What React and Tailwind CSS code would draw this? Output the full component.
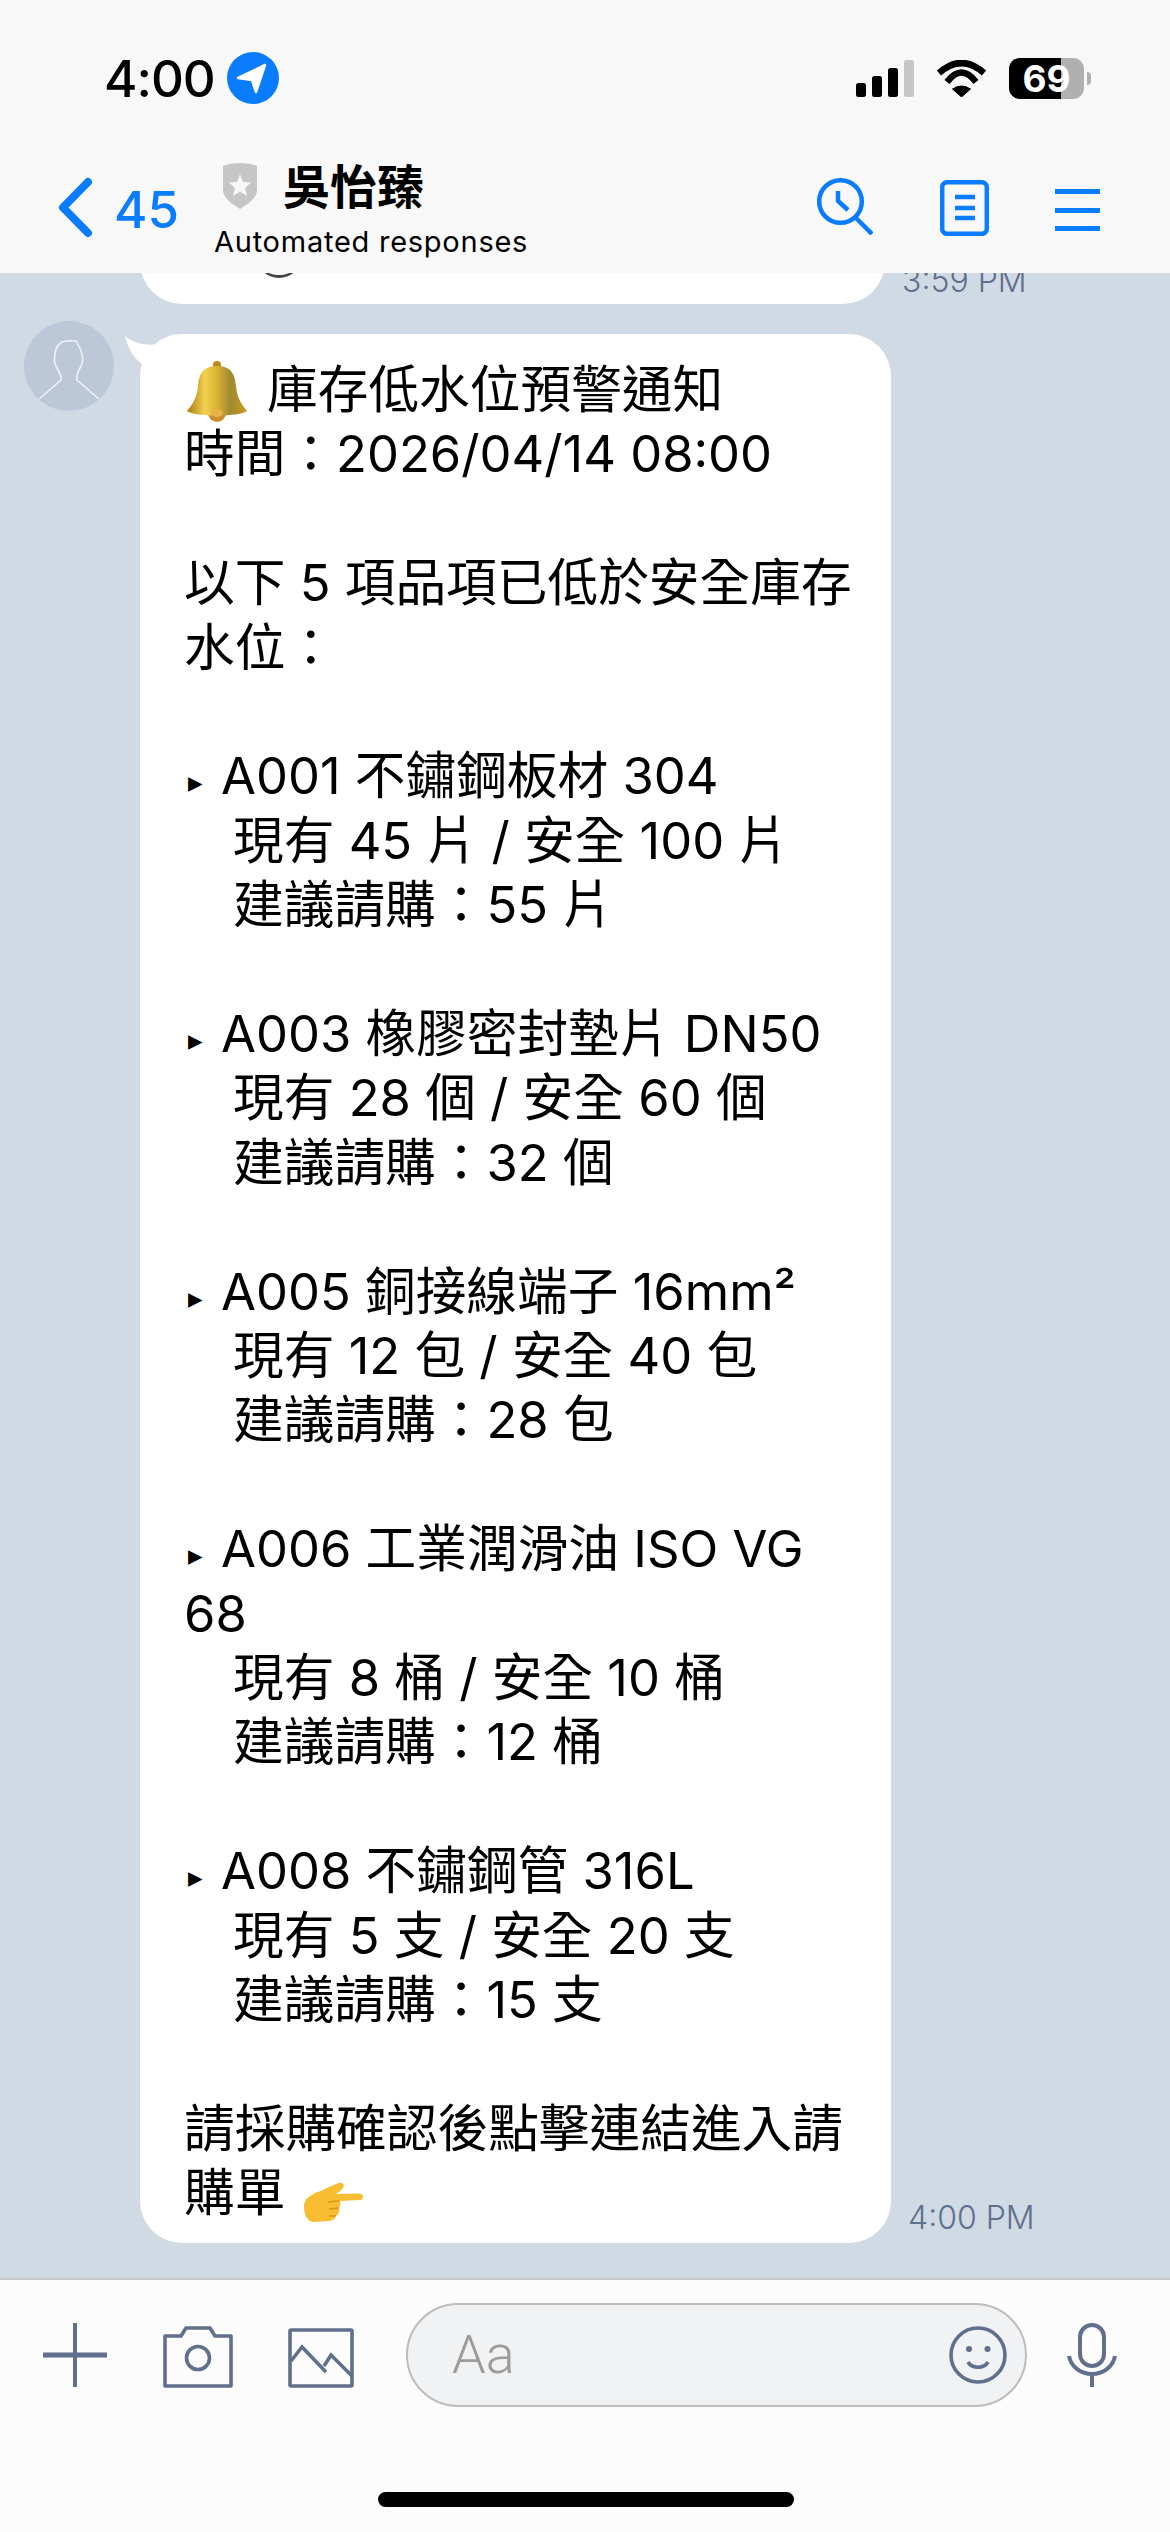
const items = [
  ["A001 不鏽鋼板材 304", "現有 45 片 / 安全 100 片", "建議請購：55 片"],
  ["A003 橡膠密封墊片 DN50", "現有 28 個 / 安全 60 個", "建議請購：32 個"],
  ["A005 銅接線端子 16mm²", "現有 12 包 / 安全 40 包", "建議請購：28 包"],
  ["A006 工業潤滑油 ISO VG 68", "現有 8 桶 / 安全 10 桶", "建議請購：12 桶"],
  ["A008 不鏽鋼管 316L", "現有 5 支 / 安全 20 支", "建議請購：15 支"],
];
const blue = "#0a7cff";
const slate = "#5f6f8c";

function Bell() {
  return (
    <svg width="62" height="62" viewBox="0 0 62 62" className="inline-block align-[-3px] my-[-12px] ml-[2px]">
      <defs>
        <linearGradient id="bellg" x1="0" x2="1" y1="0" y2="0">
          <stop offset="0" stopColor="#a9790f" />
          <stop offset="0.3" stopColor="#f3d24f" />
          <stop offset="0.5" stopColor="#d9b236" />
          <stop offset="0.72" stopColor="#a08a2e" />
          <stop offset="1" stopColor="#c99a22" />
        </linearGradient>
      </defs>
      <circle cx="31" cy="52" r="9" fill="#c98f2a" />
      <circle cx="31" cy="4" r="4" fill="#b58a16" />
      <path d="M31 5C17 5 13 13 12 25C11 36 7 43 1 50C8 56 54 56 61 50C55 43 51 36 50 25C49 13 45 5 31 5Z" fill="url(#bellg)" />
      <ellipse cx="31" cy="52" rx="6" ry="4" fill="#e9b14a" />
    </svg>
  );
}
function Point() {
  return (
    <svg width="62" height="41" viewBox="0 0 62 41" className="inline-block align-[-4px] my-[-8px] ml-[2px]">
      <path d="M2 24C2 17 8 14 13 11C20 9 30 3 37 1C41 0 43 3 41 6C39 9 36 11 33 12L58 11.5C62 12 62 18 58 18L38 19C39 22 38 25 37 26C38 30 36 33 34 34C33 37 30 39 26 39L12 40C6 40 2 34 2 24Z" fill="#f9bd32" />
      <path d="M37 19L26 20M37 26L27 27M34 34L27 34" stroke="#dc9418" strokeWidth="1.5" fill="none" />
    </svg>
  );
}
function Item({ lines }) {
  return (
    <div className="mb-[64.4px]">
      <div>
        <span className="inline-block ml-[4px] w-[33px] text-[29px] leading-[0px] align-[2px]" style={{ fontFamily: '"DejaVu Sans"' }}>▸</span>
        {lines[0]}
      </div>
      <div className="pl-[49px]">{lines[1]}</div>
      <div className="pl-[49px]">{lines[2]}</div>
    </div>
  );
}

export default function App() {
  return (
    <div className="w-[1170px] h-[2532px] flex flex-col bg-[#d0dae5] overflow-hidden" style={{ fontFamily: 'Inter, "Noto Sans CJK TC", sans-serif' }}>
      <header className="h-[273px] shrink-0 bg-[#f8f8f8] relative z-10">
        <div className="h-[156px] flex items-center justify-between pl-[104px] pr-[79px]">
          <div className="flex items-center gap-[12px]">
            <span className="text-[51px] font-medium text-black leading-none tracking-[-1px]">4:00</span>
            <svg width="52" height="52" viewBox="0 0 52 52">
              <circle cx="26" cy="26" r="26" fill={blue} />
              <path d="M11 26L38 13L29 40L25 28Z" fill="#fff" stroke="#fff" strokeWidth="2.5" strokeLinejoin="round" />
            </svg>
          </div>
          <div className="flex items-center gap-[22px]">
            <svg width="58" height="37" viewBox="0 0 58 37">
              <rect x="0" y="23" width="10" height="14" rx="2.5" fill="#000" />
              <rect x="16" y="16" width="10" height="21" rx="2.5" fill="#000" />
              <rect x="32" y="8" width="10" height="29" rx="2.5" fill="#000" />
              <rect x="48" y="0" width="10" height="37" rx="2.5" fill="#c6c6c6" />
            </svg>
            <svg width="51" height="37" viewBox="0 0 51 37">
              <path d="M25.5 37L16.5 29Q25.5 23 34.5 29Z" fill="#000" stroke="#000" strokeLinejoin="round" />
              <path d="M11 22Q25.5 3 40 22" stroke="#000" strokeWidth="6.5" fill="none" />
              <path d="M3 13Q25.5 -7 48 13" stroke="#000" strokeWidth="6.5" fill="none" />
            </svg>
            <div className="relative w-[82px] h-[41px]">
              <div className="w-[75px] h-[41px] rounded-[11px] bg-[#b0b0b0] overflow-hidden">
                <div className="w-[52px] h-full bg-black" />
              </div>
              <div className="absolute left-[78px] top-[14px] w-[4px] h-[13px] rounded-r-full bg-[#b0b0b0]" />
              <div className="absolute left-0 top-0 w-[75px] h-[41px] flex items-center justify-center text-white font-bold text-[37px] leading-none">69</div>
            </div>
          </div>
        </div>
        <div className="h-[117px] flex items-start">
          <svg width="44" height="68" viewBox="0 0 44 68" className="ml-[54px] mt-[18px] shrink-0">
            <path d="M34 8L9 33.5L34 59" stroke={blue} strokeWidth="8" fill="none" strokeLinecap="round" strokeLinejoin="round" />
          </svg>
          <span className="ml-[16px] mt-[23px] text-[51px] leading-[62px] font-medium" style={{ color: blue }}>45</span>
          <div className="ml-[35px] flex flex-col">
            <div className="flex items-center h-[50px] mt-[5px] ml-[6px]">
              <svg width="40" height="46" viewBox="0 0 36 46">
                <path d="M18 0C24 0 30 1 35 3L35 27C35 35 26 41 18 46C10 41 1 35 1 27L1 3C6 1 12 0 18 0Z" fill="#c6c6c6" />
                <path d="M18 11L21 19L29 19.5L23 25L25 33L18 28.5L11 33L13 25L7 19.5L15 19Z" fill="#f8f8f8" />
              </svg>
              <span className="ml-[23px] text-[47px] font-bold text-black leading-none">吳怡臻</span>
            </div>
            <span className="text-[29px] leading-[36px] mt-[13px] text-black tracking-[0.75px]">Automated responses</span>
          </div>
          <div className="ml-auto mr-[70px] flex items-start">
            <svg width="56" height="57" viewBox="0 0 56 57" className="mt-[22px]">
              <circle cx="23.5" cy="23.5" r="21.3" stroke={blue} strokeWidth="4.5" fill="none" />
              <path d="M39 40L55 56" stroke={blue} strokeWidth="4.5" fill="none" />
              <path d="M21 13V23L31 32" stroke={blue} strokeWidth="4.5" fill="none" />
            </svg>
            <svg width="49" height="56" viewBox="0 0 49 56" className="ml-[67px] mt-[24px]">
              <rect x="2.2" y="2.2" width="44.6" height="51.6" rx="5" stroke={blue} strokeWidth="4.5" fill="none" />
              <path d="M15 17H35M15 28H35M15 38H35" stroke={blue} strokeWidth="4.5" />
            </svg>
            <div className="ml-[66px] mt-[33px] w-[45px] h-[42px] flex flex-col justify-between">
              <div className="h-[5px]" style={{ background: blue }} />
              <div className="h-[5px]" style={{ background: blue }} />
              <div className="h-[5px]" style={{ background: blue }} />
            </div>
          </div>
        </div>
      </header>

      <main className="flex-1 overflow-hidden">
        <div className="flex items-end h-[31px]">
          <div className="ml-[140px] mt-[-59px] w-[745px] h-[90px] rounded-[42px] bg-white relative shrink-0">
            <div className="absolute left-[116px] top-[40px] w-[46px] h-[24px] border-b-[3px] border-[#444] rounded-b-full" />
          </div>
          <span className="ml-[17px] mb-[7px] text-[32px] leading-none text-[#5f6f8c] font-light">3:59 PM</span>
        </div>
        <div className="flex items-start mt-[30px]">
          <div className="ml-[24px] w-[90px] h-[90px] rounded-full bg-[#bcc8d7] overflow-hidden mt-[-13px] shrink-0">
            <svg width="90" height="90" viewBox="0 0 90 90">
              <path d="M15 78L37 59C38 56 36 52 33 47C30 42 30 38 31 35C31 26 36 20 43 20C48 20 51 19 53 21C53 24 57 26 58 34C60 39 58 44 55 49C53 53 52 56 53 59L75 78" fill="none" stroke="#eef2f6" strokeWidth="1.6" />
            </svg>
          </div>
          <div className="relative ml-[26px] w-[751px] rounded-[42px] bg-white pl-[44px] pr-[30px] pt-[24px] pb-[17px] text-[50.7px] leading-[64.4px] text-black shrink-0">
            <svg width="52" height="30" viewBox="0 0 52 30" className="absolute left-[-15px] top-0">
              <path d="M0 2C5 7 20 13 32 10C40 8 45 2 50 0L52 30L17 30C8 24 2 12 0 2Z" fill="#fff" />
            </svg>
            <div><Bell /><span className="ml-[19px]">庫存低水位預警通知</span></div>
            <div>時間：2026/04/14 08:00</div>
            <div className="h-[64.4px]" />
            <div>以下 5 項品項已低於安全庫存水位：</div>
            <div className="h-[64.4px]" />
            {items.map((l) => <Item key={l[0]} lines={l} />)}
            <div>請採購確認後點擊連結進入請購單 <Point /></div>
          </div>
          <span className="self-end ml-[17px] mb-[9px] text-[32px] leading-none text-[#5f6f8c] font-light">4:00 PM</span>
        </div>
      </main>

      <footer className="h-[254px] shrink-0 bg-[#fcfcfc] border-t-[2px] border-[#c4c8cc] flex flex-col">
        <div className="flex items-start pt-[23px]">
          <svg width="64" height="64" viewBox="0 0 64 64" className="ml-[43px] mt-[20px] shrink-0">
            <path d="M32 0V64" stroke={slate} strokeWidth="4" />
            <path d="M0 32H64" stroke={slate} strokeWidth="5" />
          </svg>
          <svg width="70" height="62" viewBox="0 0 70 62" className="ml-[56px] mt-[23px] shrink-0">
            <path d="M2 10H18L23 2H47L52 10H68V60H2Z" stroke={slate} strokeWidth="3.6" fill="none" strokeLinejoin="round" />
            <circle cx="35" cy="32" r="11.5" stroke={slate} strokeWidth="3.6" fill="none" />
          </svg>
          <svg width="66" height="60" viewBox="0 0 66 60" className="ml-[55px] mt-[25px] shrink-0">
            <rect x="2" y="2" width="62" height="56" rx="1" stroke={slate} strokeWidth="3.6" fill="none" />
            <path d="M3 33L14 19L38 44M36 38L43 27L64 48" stroke={slate} strokeWidth="3.6" fill="none" />
          </svg>
          <div className="ml-[52px] w-[621px] h-[104px] rounded-[52px] bg-[#f0f2f4] border-[2px] border-[#bcbcbc] flex items-center justify-between pl-[44px] pr-[18px] shrink-0">
            <span className="text-[54px] font-light text-[#9c9c9c] leading-none" style={{ fontFamily: "Roboto" }}>Aa</span>
            <svg width="58" height="58" viewBox="0 0 58 58">
              <circle cx="29" cy="29" r="27" stroke={slate} strokeWidth="3.6" fill="none" />
              <circle cx="20" cy="23" r="3" fill={slate} />
              <circle cx="38.5" cy="23" r="3" fill={slate} />
              <path d="M19 36C23 43 35 43 39 36" stroke={slate} strokeWidth="3.6" fill="none" />
            </svg>
          </div>
          <svg width="50" height="64" viewBox="0 0 50 64" className="ml-[40px] mt-[20px] shrink-0">
            <rect x="13" y="2" width="24" height="41" rx="12" stroke={slate} strokeWidth="4" fill="none" />
            <path d="M2 33C4 44 14 51 25 51C36 51 46 44 48 33M25 51V64" stroke={slate} strokeWidth="4" fill="none" />
          </svg>
        </div>
        <div className="ml-[378px] mt-[85px] w-[416px] h-[15px] rounded-full bg-black" />
      </footer>
    </div>
  );
}
